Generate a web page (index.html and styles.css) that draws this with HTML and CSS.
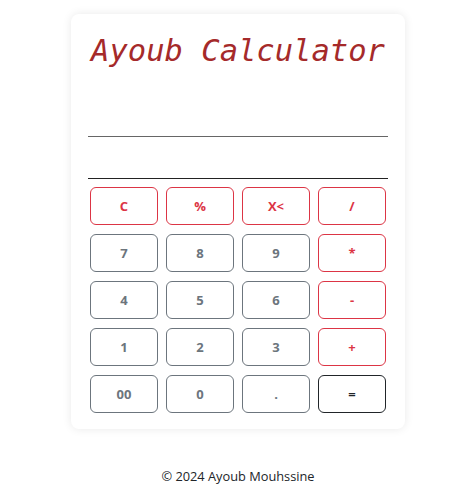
FILE: index.html
```html
<!DOCTYPE html>
<html lang="en">
<head>
<meta charset="utf-8">
<title>Ayoub Calculator</title>
<link rel="stylesheet" href="styles.css">
</head>
<body>
<main class="page">
  <section class="card">
    <h1 class="title">Ayoub Calculator</h1>
    <input class="screen screen-top" type="text" readonly>
    <input class="screen screen-bottom" type="text" readonly>
    <div class="keys">
      <button class="key key-red">C</button>
      <button class="key key-red">%</button>
      <button class="key key-red">X&lt;</button>
      <button class="key key-red">/</button>
      <button class="key">7</button>
      <button class="key">8</button>
      <button class="key">9</button>
      <button class="key key-red">*</button>
      <button class="key">4</button>
      <button class="key">5</button>
      <button class="key">6</button>
      <button class="key key-red">-</button>
      <button class="key">1</button>
      <button class="key">2</button>
      <button class="key">3</button>
      <button class="key key-red">+</button>
      <button class="key">00</button>
      <button class="key">0</button>
      <button class="key">.</button>
      <button class="key key-dark">=</button>
    </div>
  </section>
  <footer class="footer">© 2024 Ayoub Mouhssine</footer>
</main>
</body>
</html>
```

FILE: styles.css
```css
* { box-sizing: border-box; }
html, body { margin: 0; padding: 0; background: #fff; }
body { font-family: "Open Sans", "Noto Sans", sans-serif; color: #212529; }

.page {
  display: flex;
  flex-direction: column;
  align-items: center;
  padding: 14px 0 0 9px;
}

.card {
  width: 334px;
  background: #fff;
  border-radius: 8px;
  box-shadow: 0 0 10px rgba(0, 0, 0, 0.09);
  padding: 20px 17px 16px;
  display: flex;
  flex-direction: column;
}

.title {
  margin: 0;
  height: 34px;
  line-height: 34px;
  font-family: "DejaVu Sans Mono", monospace;
  font-style: italic;
  font-weight: normal;
  font-size: 30.5px;
  letter-spacing: 0;
  color: #a52a2a;
  text-align: center;
  white-space: nowrap;
}

.screen {
  display: block;
  width: 300px;
  height: 42px;
  border: none;
  border-bottom: 1px solid #666;
  outline: none;
  background: transparent;
  padding: 0;
}
.screen-top { margin-top: 27px; }
.screen-bottom { border-bottom-color: #222; }

.keys {
  display: grid;
  grid-template-columns: repeat(4, 68px);
  grid-auto-rows: 38px;
  column-gap: 8px;
  row-gap: 9px;
  margin: 8px 2px 0;
}

.key {
  font-family: "Open Sans", "Noto Sans", sans-serif;
  font-weight: 700;
  font-size: 13px;
  background: #fff;
  color: #6c757d;
  border: 1px solid #6c757d;
  border-radius: 6px;
  padding: 0;
}
.key-red { color: #dc3545; border-color: #dc3545; }
.key-dark { color: #212529; border-color: #212529; }

.footer {
  margin-top: 38px;
  font-size: 12.8px;
  color: #212529;
}
```
